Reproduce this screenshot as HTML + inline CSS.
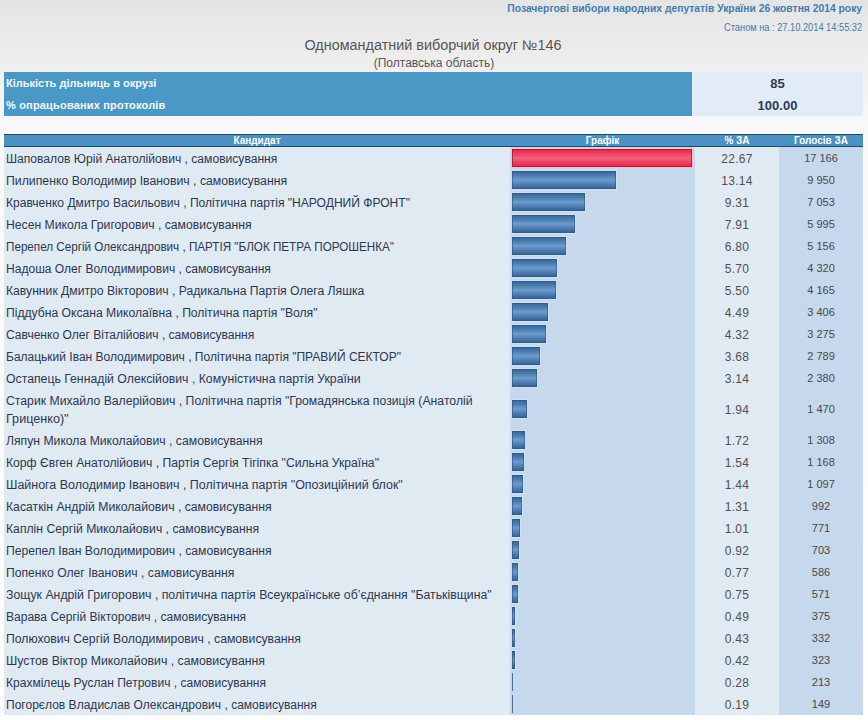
<!DOCTYPE html>
<html><head><meta charset="utf-8">
<style>
html,body{margin:0;padding:0;}
body{width:868px;height:720px;overflow:hidden;position:relative;
 background:linear-gradient(#e4e4e4 0px,#f9f9f9 130px,#ffffff 720px);
 font-family:"Liberation Sans",sans-serif;}
.t1{position:absolute;right:6px;top:3px;font-size:10px;line-height:12px;font-weight:bold;color:#3f7db2;white-space:nowrap;transform-origin:100% 50%;}
.t2{position:absolute;right:6px;top:22px;font-size:10px;line-height:12px;color:#3f7db2;white-space:nowrap;transform-origin:100% 50%;}
.h1{position:absolute;left:-1px;width:868px;text-align:center;top:37px;font-size:14px;color:#555;transform:scaleX(1.028);}
.h2{position:absolute;left:0;width:868px;text-align:center;top:56px;font-size:12px;color:#555;}
.info{position:absolute;left:4px;top:72px;width:859px;height:44px;}
.info .l{position:absolute;left:0;top:0;width:688px;height:44px;background:#4a98c6;}
.info .r{position:absolute;left:688px;top:0;width:171px;height:44px;background:#e1ecf6;}
.info .lab{position:absolute;left:2px;font-size:11px;font-weight:bold;color:#f2faff;white-space:nowrap;}
.info .val{position:absolute;left:688px;width:171px;text-align:center;font-size:13px;font-weight:bold;color:#2f3856;}
table.m{position:absolute;left:4px;top:134px;width:859px;border-collapse:collapse;}
table.m th{background:#4a93c2;color:#fff;font-size:10px;font-weight:bold;height:11px;padding:0;border-top:1px solid #1b4a6b;border-bottom:1px solid #1b4a6b;line-height:11px;}
table.m td{height:22px;padding:0;font-size:12px;color:#2c3852;box-sizing:border-box;}
table.m tr.tall td{height:40px;}
td.c1{width:506px;background:#e0eaf3;padding-left:2px !important;padding-top:2px !important;line-height:18px;}
td.c2{width:185px;background:#c6d8ec;}
td.c3{width:84px;background:#e0eaf3;text-align:center;color:#505050 !important;padding-top:2px !important;letter-spacing:0.3px;}
td.c4{width:84px;background:#c6d8ec;text-align:center;font-size:11px !important;color:#484848 !important;}
.n{display:inline-block;transform-origin:0 50%;white-space:nowrap;}
.bar{box-sizing:border-box;height:18px;margin-left:2px;border:1px solid rgba(40,80,125,0.55);
 box-shadow:0 0 0 1px rgba(214,234,252,0.6);
 background:linear-gradient(#3a6a9e,#4a7bb0 20%,#6c9ccc 50%,#4a7ab0 80%,#3a6696);}
.bar.red{border-color:rgba(150,20,50,0.7);box-shadow:0 0 0 1px rgba(252,190,215,0.95);
 background:linear-gradient(#ee2848,#f23c5c 20%,#f0627c 50%,#f23c5c 80%,#ee2848);}
</style></head><body>
<div class="t1" style="transform:scaleX(1.031)">Позачергові вибори народних депутатів України 26 жовтня 2014 року</div>
<div class="t2" style="transform:scaleX(0.926)">Станом на : 27.10.2014 14:55:32</div>
<div class="h1">Одномандатний виборчий округ №146</div>
<div class="h2">(Полтавська область)</div>
<div class="info">
 <div class="l"></div><div class="r"></div>
 <div class="lab" style="top:5px">Кількість дільниць в окрузі</div>
 <div class="lab" style="top:27px;letter-spacing:0.18px">% опрацьованих протоколів</div>
 <div class="val" style="top:4px">85</div>
 <div class="val" style="top:26px">100.00</div>
</div>
<table class="m">
<tr><th>Кандидат</th><th>Графік</th><th>% ЗА</th><th>Голосів ЗА</th></tr>
<tr><td class="c1"><span class="n" style="transform:scaleX(1.0074)">Шаповалов Юрій Анатолійович , самовисування</span></td><td class="c2"><div class="bar red" style="width:180px"></div></td><td class="c3">22.67</td><td class="c4">17 166</td></tr>
<tr><td class="c1"><span class="n" style="transform:scaleX(1.0219)">Пилипенко Володимир Іванович , самовисування</span></td><td class="c2"><div class="bar" style="width:104px"></div></td><td class="c3">13.14</td><td class="c4">9 950</td></tr>
<tr><td class="c1"><span class="n" style="transform:scaleX(1.0050)">Кравченко Дмитро Васильович , Політична партія "НАРОДНИЙ ФРОНТ"</span></td><td class="c2"><div class="bar" style="width:73px"></div></td><td class="c3">9.31</td><td class="c4">7 053</td></tr>
<tr><td class="c1"><span class="n" style="transform:scaleX(1.0166)">Несен Микола Григорович , самовисування</span></td><td class="c2"><div class="bar" style="width:63px"></div></td><td class="c3">7.91</td><td class="c4">5 995</td></tr>
<tr><td class="c1"><span class="n" style="transform:scaleX(0.9724)">Перепел Сергій Олександрович , ПАРТІЯ "БЛОК ПЕТРА ПОРОШЕНКА"</span></td><td class="c2"><div class="bar" style="width:54px"></div></td><td class="c3">6.80</td><td class="c4">5 156</td></tr>
<tr><td class="c1"><span class="n" style="transform:scaleX(1.0038)">Надоша Олег Володимирович , самовисування</span></td><td class="c2"><div class="bar" style="width:45px"></div></td><td class="c3">5.70</td><td class="c4">4 320</td></tr>
<tr><td class="c1"><span class="n" style="transform:scaleX(1.0142)">Кавунник Дмитро Вікторович , Радикальна Партія Олега Ляшка</span></td><td class="c2"><div class="bar" style="width:44px"></div></td><td class="c3">5.50</td><td class="c4">4 165</td></tr>
<tr><td class="c1"><span class="n" style="transform:scaleX(1.0114)">Піддубна Оксана Миколаївна , Політична партія "Воля"</span></td><td class="c2"><div class="bar" style="width:36px"></div></td><td class="c3">4.49</td><td class="c4">3 406</td></tr>
<tr><td class="c1"><span class="n" style="transform:scaleX(1.0040)">Савченко Олег Віталійович , самовисування</span></td><td class="c2"><div class="bar" style="width:34px"></div></td><td class="c3">4.32</td><td class="c4">3 275</td></tr>
<tr><td class="c1"><span class="n" style="transform:scaleX(1.0000)">Балацький Іван Володимирович , Політична партія "ПРАВИЙ СЕКТОР"</span></td><td class="c2"><div class="bar" style="width:28px"></div></td><td class="c3">3.68</td><td class="c4">2 789</td></tr>
<tr><td class="c1"><span class="n" style="transform:scaleX(1.0217)">Остапець Геннадій Олексійович , Комуністична партія України</span></td><td class="c2"><div class="bar" style="width:25px"></div></td><td class="c3">3.14</td><td class="c4">2 380</td></tr>
<tr class="tall"><td class="c1"><span class="n" style="transform:scaleX(1.0197)">Старик Михайло Валерійович , Політична партія "Громадянська позиція (Анатолій</span><br><span class="n" style="transform:scaleX(1.0508)">Гриценко)"</span></td><td class="c2"><div class="bar" style="width:15px"></div></td><td class="c3">1.94</td><td class="c4">1 470</td></tr>
<tr><td class="c1"><span class="n" style="transform:scaleX(1.0159)">Ляпун Микола Миколайович , самовисування</span></td><td class="c2"><div class="bar" style="width:13px"></div></td><td class="c3">1.72</td><td class="c4">1 308</td></tr>
<tr><td class="c1"><span class="n" style="transform:scaleX(1.0128)">Корф Євген Анатолійович , Партія Сергія Тігіпка "Сильна Україна"</span></td><td class="c2"><div class="bar" style="width:12px"></div></td><td class="c3">1.54</td><td class="c4">1 168</td></tr>
<tr><td class="c1"><span class="n" style="transform:scaleX(1.0366)">Шайнога Володимир Іванович , Політична партія "Опозиційний блок"</span></td><td class="c2"><div class="bar" style="width:11px"></div></td><td class="c3">1.44</td><td class="c4">1 097</td></tr>
<tr><td class="c1"><span class="n" style="transform:scaleX(1.0192)">Касаткін Андрій Миколайович , самовисування</span></td><td class="c2"><div class="bar" style="width:10px"></div></td><td class="c3">1.31</td><td class="c4">992</td></tr>
<tr><td class="c1"><span class="n" style="transform:scaleX(1.0161)">Каплін Сергій Миколайович , самовисування</span></td><td class="c2"><div class="bar" style="width:8px"></div></td><td class="c3">1.01</td><td class="c4">771</td></tr>
<tr><td class="c1"><span class="n" style="transform:scaleX(1.0115)">Перепел Іван Володимирович , самовисування</span></td><td class="c2"><div class="bar" style="width:7px"></div></td><td class="c3">0.92</td><td class="c4">703</td></tr>
<tr><td class="c1"><span class="n" style="transform:scaleX(1.0133)">Попенко Олег Іванович , самовисування</span></td><td class="c2"><div class="bar" style="width:6px"></div></td><td class="c3">0.77</td><td class="c4">586</td></tr>
<tr><td class="c1"><span class="n" style="transform:scaleX(1.0232)">Зощук Андрій Григорович , політична партія Всеукраїнське об’єднання "Батьківщина"</span></td><td class="c2"><div class="bar" style="width:6px"></div></td><td class="c3">0.75</td><td class="c4">571</td></tr>
<tr><td class="c1"><span class="n" style="transform:scaleX(1.0025)">Варава Сергій Вікторович , самовисування</span></td><td class="c2"><div class="bar" style="width:3px"></div></td><td class="c3">0.49</td><td class="c4">375</td></tr>
<tr><td class="c1"><span class="n" style="transform:scaleX(1.0173)">Полюхович Сергій Володимирович , самовисування</span></td><td class="c2"><div class="bar" style="width:3px"></div></td><td class="c3">0.43</td><td class="c4">332</td></tr>
<tr><td class="c1"><span class="n" style="transform:scaleX(1.0238)">Шустов Віктор Миколайович , самовисування</span></td><td class="c2"><div class="bar" style="width:3px"></div></td><td class="c3">0.42</td><td class="c4">323</td></tr>
<tr><td class="c1"><span class="n" style="transform:scaleX(1.0027)">Крахмілець Руслан Петрович , самовисування</span></td><td class="c2"><div class="bar" style="width:1px;border:0;background:#4a6f98;box-shadow:none"></div></td><td class="c3">0.28</td><td class="c4">213</td></tr>
<tr><td class="c1"><span class="n" style="transform:scaleX(1.0032)">Погорєлов Владислав Олександрович , самовисування</span></td><td class="c2"><div class="bar" style="width:1px;border:0;background:#4a6f98;box-shadow:none"></div></td><td class="c3">0.19</td><td class="c4">149</td></tr>
</table>
</body></html>
